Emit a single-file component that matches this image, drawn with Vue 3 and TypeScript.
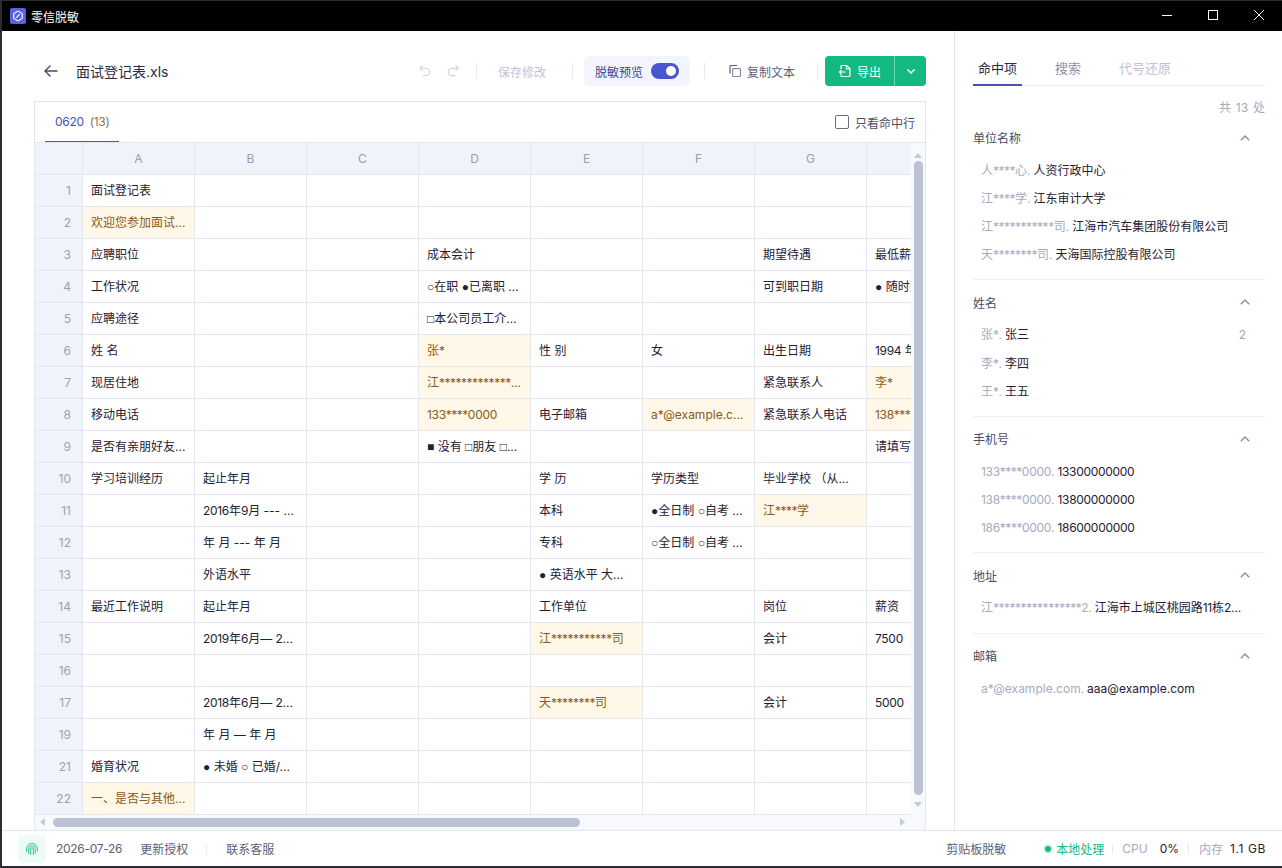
<script setup lang="ts">
type Cell = { t: string; hit?: boolean };
type Seg = { s: string; k: string };
const h = (t: string): Cell => ({ t, hit: true });

// Symbols, digits and asterisks get their own run so each can take its own metrics.
function segs(text: string): Seg[] {
  return text
    .split(/([○●□■]|\d+|\*+)/)
    .filter((s) => s !== '')
    .map((s) => ({
      s,
      k: /[○●□■]/.test(s) ? 'sym' : /\d/.test(s) ? 'dig' : s[0] === '*' ? 'ast' : '',
    }));
}

const columns = ['A', 'B', 'C', 'D', 'E', 'F', 'G', ''];
const raw: [string, (string | Cell)[]][] = [
  ['1', ['面试登记表', '', '', '', '', '', '', '']],
  ['2', [h('欢迎您参加面试...'), '', '', '', '', '', '', '']],
  ['3', ['应聘职位', '', '', '成本会计', '', '', '期望待遇', '最低薪资']],
  ['4', ['工作状况', '', '', '○在职 ●已离职 ...', '', '', '可到职日期', '● 随时到岗']],
  ['5', ['应聘途径', '', '', '□本公司员工介...', '', '', '', '']],
  ['6', ['姓 名', '', '', h('张*'), '性 别', '女', '出生日期', '1994 年']],
  ['7', ['现居住地', '', '', h('江*************...'), '', '', '紧急联系人', h('李*')]],
  ['8', ['移动电话', '', '', h('133****0000'), '电子邮箱', h('a*@example.c...'), '紧急联系人电话', h('138****0000')]],
  ['9', ['是否有亲朋好友...', '', '', '■ 没有 □朋友 □...', '', '', '', '请填写姓名']],
  ['10', ['学习培训经历', '起止年月', '', '', '学 历', '学历类型', '毕业学校 （从...', '']],
  ['11', ['', '2016年9月 --- ...', '', '', '本科', '●全日制 ○自考 ...', h('江****学'), '']],
  ['12', ['', '年 月 --- 年 月', '', '', '专科', '○全日制 ○自考 ...', '', '']],
  ['13', ['', '外语水平', '', '', '● 英语水平 大...', '', '', '']],
  ['14', ['最近工作说明', '起止年月', '', '', '工作单位', '', '岗位', '薪资']],
  ['15', ['', '2019年6月— 2...', '', '', h('江***********司'), '', '会计', '7500']],
  ['16', ['', '', '', '', '', '', '', '']],
  ['17', ['', '2018年6月— 2...', '', '', h('天********司'), '', '会计', '5000']],
  ['19', ['', '年 月 — 年 月', '', '', '', '', '', '']],
  ['21', ['婚育状况', '● 未婚 ○ 已婚/...', '', '', '', '', '', '']],
  ['22', [h('一、是否与其他...'), '', '', '', '', '', '', '']],
];
const rows = raw.map(([no, cells]) => ({
  no,
  cells: cells.map((c) => {
    const cell: Cell = typeof c === 'string' ? { t: c } : c;
    return { ...cell, parts: segs(cell.t) };
  }),
}));
const groups = [
  { title: '单位名称', items: [
    { m: '人****心.', v: '人资行政中心' },
    { m: '江****学.', v: '江东审计大学' },
    { m: '江***********司.', v: '江海市汽车集团股份有限公司' },
    { m: '天********司.', v: '天海国际控股有限公司' },
  ] },
  { title: '姓名', items: [
    { m: '张*.', v: '张三', n: '2' },
    { m: '李*.', v: '李四' },
    { m: '王*.', v: '王五' },
  ] },
  { title: '手机号', items: [
    { m: '133****0000.', v: '13300000000' },
    { m: '138****0000.', v: '13800000000' },
    { m: '186****0000.', v: '18600000000' },
  ] },
  { title: '地址', items: [{ m: '江****************2.', v: '江海市上城区桃园路11栋2...' }] },
  { title: '邮箱', items: [{ m: 'a*@example.com.', v: 'aaa@example.com' }] },
];
</script>

<template>
  <div class="window">
    <header class="titlebar">
      <div class="logo">
        <svg viewBox="0 0 16 16" width="12" height="12" fill="none" stroke="#fff" stroke-width="1.5">
          <path d="M8 1.500 13.600 4.700v6.600L8 14.500 2.400 11.300V4.700z" />
          <path d="M5.800 10.200 10.200 5.800" />
        </svg>
      </div>
      <span class="app-name">零信脱敏</span>
      <div class="win-controls">
        <svg viewBox="0 0 46 32" width="46" height="32" stroke="#fff" fill="none" stroke-width="1"><path d="M18 15.500h10" /></svg>
        <svg viewBox="0 0 46 32" width="46" height="32" stroke="#fff" fill="none" stroke-width="1"><rect x="18.500" y="10.500" width="9" height="9" /></svg>
        <svg viewBox="0 0 46 32" width="46" height="32" stroke="#fff" fill="none" stroke-width="1"><path d="M18 10l10 10M28 10 18 20" /></svg>
      </div>
    </header>

    <div class="content">
      <main class="main">
        <div class="toolbar">
          <svg class="back" viewBox="0 0 16 16" width="16" height="16" fill="none" stroke="#4a4a68" stroke-width="1.4">
            <path d="M14.500 8H2M7.500 2.500 2 8l5.500 5.500" />
          </svg>
          <span class="file-name">面试登记表.xls</span>
          <div class="spacer"></div>
          <svg class="undo" viewBox="0 0 14 14" width="14" height="14" fill="none" stroke="#d5d6e0" stroke-width="1.3">
            <path d="M4.600 1.500 1.800 4.300l2.800 2.800M2 4.300h6a3.700 3.700 0 0 1 0 7.400H4.500" />
          </svg>
          <svg class="redo" viewBox="0 0 14 14" width="14" height="14" fill="none" stroke="#d5d6e0" stroke-width="1.3">
            <path d="M9.400 1.500l2.800 2.800-2.800 2.800M12 4.300H6a3.700 3.700 0 0 0 0 7.400h3.500" />
          </svg>
          <i class="sep sep-a"></i>
          <span class="save">保存修改</span>
          <i class="sep sep-b"></i>
          <div class="preview">
            <span>脱敏预览</span>
            <span class="switch"><b></b></span>
          </div>
          <i class="sep sep-c"></i>
          <div class="copy">
            <svg viewBox="0 0 14 14" width="14" height="14" fill="none" stroke="#5d5e78" stroke-width="1.2">
              <path d="M2 9.500V2.200c0-.4.300-.7.700-.7H9" />
              <rect x="4.600" y="4.600" width="7.900" height="7.900" rx=".8" stroke="#8a8ba3" />
            </svg>
            <span>复制文本</span>
          </div>
          <i class="sep sep-d"></i>
          <div class="export">
            <div class="export-main">
              <svg viewBox="0 0 14 14" width="14" height="14" fill="none" stroke="#fff" stroke-width="1.2">
                <path d="M3 5V2.200c0-.4.300-.7.700-.7h5L12 4.800v7c0 .4-.3.7-.7.7H3.700c-.4 0-.7-.3-.7-.7v-1.300" />
                <path d="M8.500 1.500v3.500H12M7.500 8H1.500M3.500 6 1.500 8l2 2" />
              </svg>
              <span>导出</span>
            </div>
            <div class="export-drop">
              <svg viewBox="0 0 10 10" width="10" height="10" fill="none" stroke="#fff" stroke-width="1.5"><path d="M1.500 3.500 5 7l3.500-3.500" /></svg>
            </div>
          </div>
        </div>

        <section class="sheet">
          <div class="sheet-tabs">
            <div class="sheet-tab"><span class="dig">0620</span><em>(13)</em></div>
            <label class="only-hit"><i class="check"></i>只看命中行</label>
          </div>
          <div class="sheet-body">
            <div class="sheet-view">
              <div class="grid-row head">
                <div class="no"></div>
                <div v-for="(c, i) in columns" :key="i" class="col-head">{{ c }}</div>
              </div>
              <div v-for="r in rows" :key="r.no" class="grid-row">
                <div class="no num">{{ r.no }}</div>
                <div v-for="(c, i) in r.cells" :key="i" class="cell" :class="{ hit: c.hit }"><span v-for="(p, j) in c.parts" :key="j" :class="p.k">{{ p.s }}</span></div>
              </div>
            </div>
            <div class="vbar">
              <i class="tri up"></i>
              <div class="vtrack"><div class="vthumb"></div></div>
              <i class="tri down"></i>
            </div>
            <div class="hbar">
              <i class="tri left"></i>
              <div class="htrack"><div class="hthumb"></div></div>
              <i class="tri right"></i>
            </div>
          </div>
        </section>
      </main>

      <aside class="side">
        <nav class="side-tabs">
          <span class="active">命中项</span>
          <span class="t2">搜索</span>
          <span class="t3">代号还原</span>
        </nav>
        <div class="total">共 13 处</div>
        <div v-for="g in groups" :key="g.title" class="group">
          <div class="group-head">
            <span>{{ g.title }}</span>
            <svg viewBox="0 0 10 6" width="10" height="6" fill="none" stroke="#8d8ea8" stroke-width="1.4"><path d="M.8 5.200 5 1l4.200 4.200" /></svg>
          </div>
          <div v-for="it in g.items" :key="it.m" class="hit-item">
            <span class="mask"><span v-for="(p, j) in segs(it.m)" :key="j" :class="p.k">{{ p.s }}</span></span>
            <span class="val"><span v-for="(p, j) in segs(it.v)" :key="j" :class="p.k">{{ p.s }}</span></span>
            <span v-if="it.n" class="count">{{ it.n }}</span>
          </div>
        </div>
      </aside>
    </div>

    <footer class="status">
      <div class="fp">
        <svg viewBox="0 0 16 16" width="14" height="14" fill="none" stroke="#12b886" stroke-width="1" stroke-linecap="round">
          <path d="M1.800 10.500V8a6.200 6.200 0 0 1 12.400 0v2.500" />
          <path d="M4.200 13V8a3.800 3.800 0 0 1 7.600 0v5" />
          <path d="M6.500 14.500V8a1.500 1.500 0 0 1 3 0v6.500" />
        </svg>
      </div>
      <span class="date dig">2026-07-26</span>
      <span class="link">更新授权</span>
      <i class="sep st-sep"></i>
      <span class="link service">联系客服</span>
      <div class="spacer"></div>
      <span class="link clip">剪贴板脱敏</span>
      <i class="dot"></i>
      <span class="local">本地处理</span>
      <i class="sep st-sep2"></i>
      <span class="muted">CPU</span>
      <span class="strong cpu">0%</span>
      <i class="sep st-sep3"></i>
      <span class="muted">内存</span>
      <span class="strong mem">1.1 GB</span>
    </footer>
  </div>
</template>

<style scoped>
* { box-sizing: border-box; }
.window {
  width: 1282px;
  height: 868px;
  display: flex;
  flex-direction: column;
  background: #fff;
  border-style: solid;
  border-color: #2b2d30;
  border-width: 1px 0 2px 2px;
  font-family: Inter, "Noto Sans CJK SC", sans-serif;
  font-size: 12px;
  color: #1f2035;
  overflow: hidden;
}
i { display: block; font-style: normal; }
.spacer { flex: 1; }
.sep { width: 1px; height: 16px; background: #e8e9f0; flex: none; }
.dig { letter-spacing: -0.3px; }
.ast { letter-spacing: -0.5px; }
.sym { font-family: "Liberation Sans", sans-serif; font-size: 12px; }

.titlebar {
  height: 30px;
  flex: none;
  background: #000;
  display: flex;
  align-items: center;
  padding-left: 8px;
  color: #fff;
}
.logo {
  width: 16px;
  height: 16px;
  background: #5b62e0;
  border-radius: 2px;
  display: flex;
  align-items: center;
  justify-content: center;
}
.app-name { margin-left: 5px; font-size: 12px; }
.win-controls { margin-left: auto; display: flex; height: 30px; align-items: center; }

.content { flex: 1; display: flex; min-height: 0; }
.main {
  width: 953px;
  flex: none;
  border-right: 1px solid #e4e5ee;
  padding: 0 28px 0 32px;
  display: flex;
  flex-direction: column;
}
.toolbar {
  height: 70px;
  flex: none;
  display: flex;
  align-items: center;
  padding-top: 10px;
}
.back { margin-left: 9px; }
.file-name { margin-left: 17px; font-size: 14px; color: #2b2c44; }
.redo { margin-left: 14px; }
.sep-a { margin-left: 16px; }
.save { margin-left: 21px; color: #c3c4d2; }
.sep-b { margin-left: 26px; margin-right: 11px; }
.preview {
  height: 30px;
  padding: 0 11px;
  width: 106px;
  background: #f3f5fd;
  border-radius: 5px;
  display: flex;
  align-items: center;
  justify-content: space-between;
  color: #3f4296;
}
.switch {
  width: 28px;
  height: 16px;
  background: #4a55d1;
  border-radius: 8px;
  position: relative;
  display: block;
}
.switch b {
  position: absolute;
  right: 3px;
  top: 3px;
  width: 10px;
  height: 10px;
  background: #fff;
  border-radius: 50%;
}
.sep-c { margin-left: 14px; }
.copy { margin-left: 23px; display: flex; align-items: center; gap: 5px; color: #5d5e78; }
.sep-d { margin-left: 22px; }
.export {
  margin-left: 7px;
  width: 101px;
  height: 30px;
  border-radius: 4px;
  background: #12b981;
  color: #fff;
  display: flex;
}
.export-main {
  width: 70px;
  display: flex;
  align-items: center;
  justify-content: center;
  gap: 5px;
  border-right: 1px solid #6fd6b4;
}
.export-drop { flex: 1; display: flex; align-items: center; justify-content: center; }

.sheet {
  flex: none;
  height: 729px;
  width: 892px;
  border: 1px solid #e4e5ee;
  border-bottom-width: 0;
  display: flex;
  flex-direction: column;
}
.sheet-tabs {
  height: 41px;
  flex: none;
  display: flex;
  align-items: stretch;
  justify-content: space-between;
  padding: 0 10px;
  border-bottom: 1px solid #e4e5ee;
}
.sheet-tab {
  width: 74px;
  padding-left: 10px;
  color: #4a4fb5;
  display: flex;
  align-items: center;
  border-bottom: 1px solid #4a55d1;
}
.sheet-tab em { font-style: normal; font-size: 12px; color: #8a7460; margin-left: 6px; letter-spacing: -0.3px; }
.only-hit { display: flex; align-items: center; gap: 6px; color: #4f5068; }
.check {
  width: 14px;
  height: 14px;
  border: 1px solid #6b6c80;
  border-radius: 2px;
}
.sheet-body {
  flex: 1;
  min-height: 0;
  display: grid;
  grid-template-columns: 876px 14px;
  grid-template-rows: 672px 14px;
  background: #f8f9fc;
}
.sheet-view { overflow: hidden; background: #fff; }
.grid-row {
  display: grid;
  grid-template-columns: 48px repeat(8, 112px);
  height: 32px;
}
.no {
  background: #f0f3f9;
  border-right: 1px solid #e4e7ef;
  border-bottom: 1px solid #e4e7ef;
}
.num {
  text-align: right;
  padding-right: 11px;
  line-height: 31px;
  color: #9d9fb8;
}
.col-head {
  background: #f0f3f9;
  border-right: 1px solid #e4e7ef;
  border-bottom: 1px solid #e4e7ef;
  text-align: center;
  line-height: 31px;
  color: #9a9cb6;
}
.cell {
  border-right: 1px solid #e4e7ef;
  border-bottom: 1px solid #e4e7ef;
  padding-left: 8px;
  line-height: 31px;
  white-space: nowrap;
  overflow: hidden;
  color: #1f2035;
}
.cell.hit { background: #fff7e8; color: #8a5a1a; }
.vbar { display: flex; flex-direction: column; align-items: center; }
.vtrack { flex: 1; width: 9px; padding-top: 3px; }
.vthumb { width: 9px; height: 634px; border-radius: 5px; background: #bcc2d6; }
.hbar {
  grid-column: 1 / 3;
  display: flex;
  align-items: center;
}
.htrack { flex: 1; height: 9px; padding-left: 4px; }
.hthumb { width: 527px; height: 9px; border-radius: 5px; background: #bcc2d6; }
.tri { width: 0; height: 0; flex: none; border-style: solid; border-color: transparent; }
.tri.up { border-width: 0 4.500px 5px; border-bottom-color: #c5cadb; margin-top: 10px; }
.tri.down { border-width: 5px 4.500px 0; border-top-color: #c5cadb; margin-bottom: 8px; }
.tri.left { border-width: 4.500px 5px 4.500px 0; border-right-color: #c5cadb; margin-left: 5px; margin-right: 4px; }
.tri.right { border-width: 4.500px 0 4.500px 5px; border-left-color: #c5cadb; margin-left: 4px; margin-right: 20px; }

.side { width: 327px; flex: none; min-width: 0; padding: 0 17px 0 18px; }
.side-tabs {
  height: 55px;
  padding-top: 27px;
  display: flex;
  border-bottom: 1px solid #eeeff4;
  font-size: 13px;
  color: #8f90a6;
}
.side-tabs span { display: block; height: 28px; line-height: 20px; }
.side-tabs .active {
  width: 49px;
  padding-left: 5px;
  color: #2b2c44;
  border-bottom: 2px solid #4a4fb5;
}
.side-tabs .t2 { margin-left: 33px; }
.side-tabs .t3 { margin-left: 38px; color: #c0c1d0; }
.total { text-align: right; color: #a8a9bf; height: 15.500px; line-height: 16px; margin-top: 14px; word-spacing: 1.500px; }
.group { border-bottom: 1px solid #eeeff4; padding: 8px 0 10px; }
.group:last-child { border-bottom: 0; }
.group-head {
  display: flex;
  align-items: center;
  justify-content: space-between;
  height: 28px;
  margin-bottom: 5px;
  padding-right: 15px;
  color: #4a4b63;
}
.hit-item {
  height: 28.200px;
  line-height: 20px;
  padding: 0 19px 0 8px;
  display: flex;
  white-space: nowrap;
  align-items: center;
}
.mask { color: #a8a9bf; margin-right: 3px; }
.val { color: #1f2035; }
.count { margin-left: auto; color: #9d9fb8; }

.status {
  height: 36px;
  flex: none;
  border-top: 1px solid #e4e5ee;
  display: flex;
  align-items: center;
  padding-left: 16px;
  color: #5d5e78;
}
.fp {
  width: 28px;
  height: 28px;
  border-radius: 3px;
  background: #eefbf6;
  display: flex;
  align-items: center;
  justify-content: center;
}
.date { margin-left: 10px; }
.link { color: #5d5e78; }
.date + .link { margin-left: 18px; }
.st-sep { height: 10px; margin-left: 18px; }
.service { margin-left: 19px; }
.clip { margin-right: 39px; }
.dot {
  width: 6px;
  height: 6px;
  border-radius: 50%;
  background: #12b981;
  box-shadow: 0 0 0 2px #d6f4ea;
}
.local { margin-left: 5px; color: #12b981; }
.st-sep2 { height: 10px; margin-left: 8px; }
.muted { color: #a8a9bf; }
.st-sep2 + .muted { margin-left: 9px; }
.strong { color: #1f2035; }
.cpu { margin-left: 12px; }
.st-sep3 { height: 10px; margin-left: 9px; }
.st-sep3 + .muted { margin-left: 10px; }
.mem { margin-left: 7px; margin-right: 16px; letter-spacing: .6px; }
</style>
